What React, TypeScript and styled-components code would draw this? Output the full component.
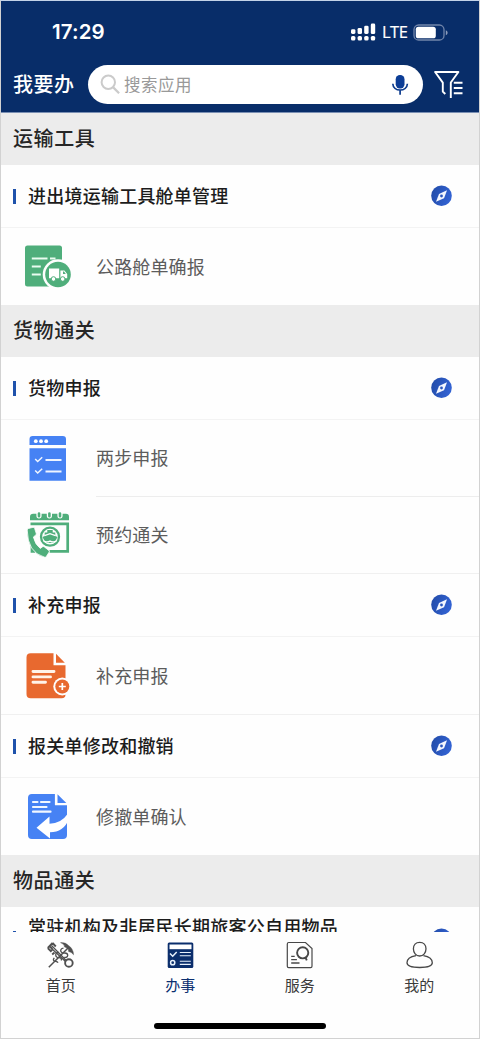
import React from "react";
import styled, { createGlobalStyle } from "styled-components";

const GlobalStyle = createGlobalStyle`
  * { box-sizing: border-box; }
  body {
    margin: 0;
    font-family: "Noto Sans CJK SC", "Noto Sans", sans-serif;
    background: #fff;
  }
  svg { display: block; flex: none; }
`;

const Screen = styled.div`
  display: flex;
  flex-direction: column;
  width: 480px;
  height: 1039px;
  border: 1px solid #d2d2d2;
  border-top-color: #c3d3e8;
  overflow: hidden;
  background: #fefefe;
`;

const Header = styled.header`
  flex: none;
  height: 112px;
  background: #082d69;
  color: #fff;
  border-bottom: 1px solid #7a8fb3;
`;

const StatusBar = styled.div`
  display: flex;
  align-items: center;
  height: 63px;
  padding: 0 31px 0 51px;
`;

const Clock = styled.div`
  flex: 1;
  font: 600 20.5px/24px Inter, sans-serif;
  letter-spacing: 0.1px;
  padding-bottom: 1px;
`;

const Network = styled.span`
  width: 26px;
  margin: 0 5px 0 6px;
  font: 500 16.5px/24px "Open Sans", sans-serif;
  letter-spacing: -0.5px;
  white-space: nowrap;
  padding-bottom: 1px;
  -webkit-text-stroke: 0.2px #fff;
`;

const SearchRow = styled.div`
  display: flex;
  align-items: center;
  height: 41px;
  padding-left: 12px;
`;

const PageTitle = styled.h1`
  width: 75px;
  margin: 0;
  padding-bottom: 1px;
  font-size: 20px;
  font-weight: 500;
  line-height: 30px;
  letter-spacing: 0.5px;
`;

const SearchBox = styled.div`
  display: flex;
  align-items: center;
  width: 335px;
  height: 39px;
  margin-right: 11px;
  padding: 0 14px 0 12px;
  border-radius: 20px;
  background: #fff;
`;

const Placeholder = styled.span`
  flex: 1;
  padding: 0 0 2px 3px;
  font-size: 16.5px;
  line-height: 24px;
  letter-spacing: 0.5px;
  color: #999;
`;

const List = styled.main`
  flex: none;
  height: 819px;
  overflow: hidden;
`;

const SectionTitle = styled.h2`
  height: 52px;
  margin: 0;
  padding: 0 0 0 12px;
  background: #ececec;
  color: #262626;
  font-size: 20px;
  font-weight: 500;
  line-height: 50px;
  letter-spacing: 0.6px;
`;

const GroupHead = styled.div<{ $h: number }>`
  display: flex;
  align-items: center;
  height: ${(p) => p.$h}px;
  padding: 0 27px 0 12px;
  border-bottom: 1px solid #f3f3f3;
`;

const Marker = styled.i`
  width: 2.5px;
  height: 15px;
  margin-right: 12.5px;
  background: #1f52ab;
`;

const GroupName = styled.h3`
  flex: 1;
  margin: 0;
  padding-bottom: 2px;
  color: #1c1c1c;
  font-size: 18px;
  font-weight: 500;
  line-height: 23px;
  letter-spacing: 0.23px;
`;

const GroupText = styled.span`
  display: block;
  width: 316px;
`;

const Item = styled.div<{ $h: number }>`
  display: flex;
  height: ${(p) => p.$h}px;
  padding-left: 20px;
  align-items: center;
`;

const ItemLabel = styled.div<{ $divided?: boolean }>`
  flex: 1;
  display: flex;
  align-items: center;
  align-self: stretch;
  margin-left: 21px;
  padding-bottom: 2px;
  border-bottom: ${(p) => (p.$divided ? "1px solid #ededed" : "0")};
  color: #5c5c5c;
  font-size: 18px;
  font-weight: 400;
  letter-spacing: 0.15px;
`;

const GroupRule = styled.div`
  height: 1px;
  background: #f0f0f0;
`;

const TabBar = styled.nav`
  display: flex;
  flex: none;
  height: 75px;
  background: #fefefe;
`;

const Tab = styled.div<{ $active?: boolean }>`
  flex: 1;
  display: flex;
  flex-direction: column;
  align-items: center;
  padding-top: 9px;
  gap: 4px;
  color: ${(p) => (p.$active ? "#0b2f70" : "#3a3a3a")};
  font-size: 15px;
  line-height: 24px;
  letter-spacing: 0.1px;
`;

const HomeIndicator = styled.div`
  flex: none;
  width: 172px;
  height: 6px;
  margin: 16px auto 0;
  border-radius: 3px;
  background: #000;
`;

const Signal = () => (
  <svg width="26" height="20" viewBox="0 0 26 20" fill="#fff">
    {[0, 1, 2, 3].map((n) => (
      <g key={n}>
        <rect x={1 + n * 6.6} y={[6.2, 4.9, 2.7, 0.6][n]} width="4.4" height={[4.8, 6.2, 8.3, 10.5][n]} rx="1.4" />
        <rect x={1 + n * 6.6} y="12.9" width="4.4" height="4.6" rx="1.6" />
      </g>
    ))}
  </svg>
);

const Battery = () => (
  <svg width="35" height="18" viewBox="0 0 35 18">
    <rect x="1" y="1" width="30" height="15" rx="4.6" fill="none" stroke="#7286ab" strokeWidth="1.3" />
    <rect x="2.8" y="2.7" width="20" height="11.6" rx="2.6" fill="#fff" />
    <path d="M32.8 6.2v5c1.2-.4 1.8-1.4 1.8-2.5s-.6-2.1-1.8-2.5z" fill="#8b9bb9" />
  </svg>
);

const SearchIcon = () => (
  <svg width="21" height="21" viewBox="0 0 21 21" fill="none" stroke="#cbcbcb" strokeWidth="2">
    <circle cx="8.3" cy="8.3" r="6.7" />
    <path d="M13.2 13.4l5.9 5.8" strokeWidth="2.3" />
  </svg>
);

const MicIcon = () => (
  <svg width="18" height="22" viewBox="0 0 18 22" fill="none" stroke="#0c3b8d" strokeWidth="1.7">
    <rect x="4.7" y="1" width="8.8" height="13.4" rx="4.2" fill="#0c3d96" stroke="none" />
    <path d="M1.8 9.7c.2 4 3.4 6.3 7.3 6.3s7.1-2.3 7.3-6.3M9.1 16v4.8" />
  </svg>
);

const FilterIcon = () => (
  <svg width="30" height="30" viewBox="0 0 30 30" fill="none" stroke="#fff" strokeWidth="1.9">
    <path d="M11.3 24l-2.5-2.4V12.600L1.100 2H24.400l-7.600 10.500v15.400" strokeLinejoin="round" />
    <path d="M19.800 12.800h8.700M19.800 18h8.700M19.800 23.200h8.700" />
  </svg>
);

const Compass = () => (
  <svg width="22" height="22" viewBox="0 0 22 22">
    <defs>
      <linearGradient id="compassFill" x1="0" y1="0" x2="1" y2="0.3">
        <stop offset="0" stopColor="#214aa6" />
        <stop offset="1" stopColor="#3262d2" />
      </linearGradient>
    </defs>
    <circle cx="11.500" cy="10.800" r="10.300" fill="url(#compassFill)" />
    <path d="M17 5.300L14 13.200l-8 3.600L9 8.900z" fill="#f4f7ff" />
    <circle cx="11.500" cy="11" r="1.400" fill="#2b57bd" />
  </svg>
);

const TruckDocIcon = () => (
  <svg width="54" height="54" viewBox="0 0 54 54">
    <path d="M4 8q0-2.500 2.500-2.500h32Q41 5.500 41 8v38.500H6.500Q4 46.500 4 44z" fill="#4fae7b" />
    <path d="M10.800 18.500h15.700M29 18.500h5.500M10.800 26.500h9M10.800 34.500h9" stroke="#e9fbf0" strokeWidth="2.200" />
    <circle cx="37" cy="34.500" r="15.300" fill="#fefefe" />
    <circle cx="37" cy="34.500" r="12.800" fill="#4fae7b" />
    <path d="M28 28.500h10.200v9.700H28z M39.400 30.500h4l2.800 3.500v4.200h-6.800z" fill="#fff" />
    <path d="M42 31.500h1l1.800 2.600H42z" fill="#4fae7b" />
    <g fill="#fff" stroke="#4fae7b" strokeWidth="1">
      <circle cx="32.500" cy="39" r="2.300" />
      <circle cx="41.700" cy="39" r="2.300" />
    </g>
  </svg>
);

const ChecklistIcon = () => (
  <svg width="54" height="54" viewBox="0 0 54 54">
    <path d="M8.500 13V7.200q0-3.200 3.200-3.200h30.100Q45 4 45 7.200V13z M8.500 16.200H45v32.500H8.500z" fill="#4682f4" />
    <g fill="#fff">
      <circle cx="14.800" cy="9.200" r="1.900" />
      <circle cx="20" cy="9.200" r="1.900" />
      <circle cx="25.200" cy="9.200" r="1.900" />
    </g>
    <g fill="none" stroke="#eff5ff" strokeWidth="1.900">
      <path d="M14.200 26.900l2.500 2.600 4.500-4.200M14.200 38.400l2.500 2.600 4.500-4.200" strokeWidth="1.500" />
      <path d="M24.500 28h16M24.500 39.500h16" />
    </g>
  </svg>
);

const BookingIcon = () => (
  <svg width="54" height="54" viewBox="0 0 54 54">
    <path d="M9 12.300V9q0-3.200 3.200-3.200H45Q48 5.800 48 9v3.300z" fill="#4fae7b" />
    <g stroke="#fefefe" strokeWidth="5.200" strokeLinecap="round">
      <path d="M18 4v3.800M28.400 4v3.800M39 4v3.800" />
    </g>
    <g stroke="#4fae7b" strokeWidth="2.600" strokeLinecap="round">
      <path d="M18 5.500v2.800M28.400 5.500v2.800M39 5.500v2.800" />
    </g>
    <path d="M9.500 15.900h37.200v27.500H28.500M11 38v5.500h3" fill="none" stroke="#4fae7b" strokeWidth="2.700" />
    <path d="M6.200 22q0-1.300 1.300-1.500l4.500-1.200q1.300-.2 1.600 1l1.600 5q.3 1.200-.6 1.900l-2.200 1.800q1.500 7.300 6.900 11.400l2-1.500q1-.7 2 0l4.500 3.500q1 .8.200 1.900l-2.500 4q-.8 1.200-2.200.8Q6.500 44.500 6.200 22z" fill="#4fae7b" stroke="#fefefe" strokeWidth=".8" />
    <circle cx="29" cy="28.700" r="9" fill="#fefefe" stroke="#4fae7b" strokeWidth="2.300" />
    <path d="M21.500 29l2.200-.9v-3.700h2.600v-2.300h5.400v2.300h2.600v3.700l2.200.9-2.300 4.500q-5.200 3-10.400 0z" fill="#4fae7b" />
    <path d="M23.500 27.600l5.500-2 5.500 2M22.300 32.800q3.300 2 6.700.3 3.400 1.700 6.700-.3" fill="none" stroke="#fff" strokeWidth="1.300" />
  </svg>
);

const AddDocIcon = () => (
  <svg width="54" height="54" viewBox="0 0 54 54">
    <path d="M5.500 8.500q0-4.200 4.200-4.200H32.500v12h12V45.500q0 3.800-3.800 3.800H9.700Q5.500 49.300 5.500 45z" fill="#e8692f" />
    <path d="M35 4.700v9h8.800z" fill="#e8692f" />
    <path d="M12 22.500H33M12 27.900H29.500M12 33.200H24.500" stroke="#fff3e9" strokeWidth="2.900" strokeLinecap="round" />
    <circle cx="41.300" cy="37.500" r="9" fill="#fefefe" />
    <circle cx="41.300" cy="37.500" r="7" fill="#e8692f" />
    <path d="M41.300 34v7M37.800 37.500h7" stroke="#fff" strokeWidth="1.700" />
  </svg>
);

const ReturnDocIcon = () => (
  <svg width="54" height="54" viewBox="0 0 54 54">
    <path d="M7 8q0-3.900 3.900-3.900h23v11.200H46V45q0 4-4 4H10.900Q7 49 7 45z" fill="#4682f4" />
    <path d="M36.500 4.300v8.800h8.800z" fill="#4682f4" />
    <path d="M12 12h4.500M20 12h8.500M12 17h13.500M12 21.700H29.500" stroke="#f2f7ff" strokeWidth="2.200" strokeLinecap="round" />
    <path d="M15.500 37.700L28.500 26.500v7.200q11.500 0 18.500-10.200l.8 6Q42.500 42.300 29 42.300v6.200z" fill="#fff" />
  </svg>
);

const CustomsIcon = () => (
  <svg width="29" height="28" viewBox="0 0 29 28" fill="none" stroke="#505050" strokeWidth="1.600">
    <path d="M5.500 4.500L19.800 19M4 6l16 15" strokeWidth="1.200" />
    <path d="M1.800 7l4.800-5M6.500 2l3.300 3.500M1.800 7l3 3.200 1.700-1.800M8.500 11.500l-2.300 2M3.500 4.800l3 3" strokeWidth="1.900" />
    <circle cx="22.900" cy="22" r="3.800" strokeWidth="1.900" />
    <path d="M2.800 26.300L22.500 6.500" strokeWidth="1.500" />
    <path d="M14.500 1.600q5.300-.4 8 2.900 4.800 3 5.100 9.300-2.200-3-5-3.300.2-2.200-1.300-3.200Q20 6.200 18.500 6q.2-2.800-4-4.400z" fill="#505050" strokeWidth=".4" />
    <path d="M17.500 7.200q-3.600.6-2.600 3.200.8 2 4 1.600 2.800 0 2.800 2.300-.4 2.700-3.500 2M12.800 11.500q-3.500-.2-3 3 .3 2.300 3.300 2.200 2.600.1 2.300 2.800M8.300 16.800q-2 2.500.3 3.300 2.600.3 3.500 1.500" strokeWidth="1.300" />
  </svg>
);

const TasksIcon = () => (
  <svg width="29" height="28" viewBox="0 0 29 28">
    <rect x="1.700" y="1.400" width="25.600" height="25.600" rx="1.500" fill="#0b2e6c" />
    <path d="M3.500 3.500h22v4.700h-22z" fill="#fff" />
    <g fill="none" stroke="#e8f1fc" strokeWidth="1.500">
      <path d="M4 12.500l2.700 2.700 4-4.300" />
      <circle cx="6.700" cy="21.700" r="2.100" />
      <path d="M13.800 11.500h11M13.800 14.700h11M13.800 20.200h11M13.800 23.400h11" strokeWidth="1.100" />
    </g>
  </svg>
);

const ServiceIcon = () => (
  <svg width="29" height="28" viewBox="0 0 29 28" fill="none" stroke="#484848" strokeWidth="1.200">
    <path d="M3.700 1.500H20.500L27 7.500V25.200q0 1.400-1.400 1.400H3.700q-1.400 0-1.400-1.400V2.900q0-1.400 1.400-1.400z" />
    <circle cx="17.700" cy="11.800" r="5.600" strokeWidth="1.900" />
    <path d="M20.500 16.700l1.300 2.700" strokeWidth="1.900" />
    <path d="M6.200 15.300h3.500M6.200 18.700h5.700M6.200 22h8.300" strokeWidth="1.300" />
  </svg>
);

const ProfileIcon = () => (
  <svg width="29" height="28" viewBox="0 0 29 28" fill="none" stroke="#484848" strokeWidth="1.300">
    <path d="M14.700 1.300c4 0 6.300 2.800 6.300 6.500 0 4-2.500 7.200-6.300 7.200s-6.300-3.200-6.300-7.200c0-3.700 2.300-6.500 6.300-6.500z" />
    <path d="M11 14.600C5.500 15.500 2 17.300 2 21.700q0 4.700 12.700 4.800 12.600-.1 12.600-4.800c0-4.400-3.500-6.200-8.900-7.100" />
  </svg>
);

function Group({ name, height = 64 }: { name: string; height?: number }) {
  return (
    <GroupHead $h={height}>
      <Marker />
      <GroupName>
        <GroupText>{name}</GroupText>
      </GroupName>
      <Compass />
    </GroupHead>
  );
}

interface EntryProps {
  icon: React.ReactNode;
  label: string;
  height?: number;
  divided?: boolean;
}

function Entry({ icon, label, height = 77, divided }: EntryProps) {
  return (
    <Item $h={height}>
      {icon}
      <ItemLabel $divided={divided}>{label}</ItemLabel>
    </Item>
  );
}

export default function App() {
  return (
    <>
      <GlobalStyle />
      <Screen>
        <Header>
          <StatusBar>
            <Clock>17:29</Clock>
            <Signal />
            <Network>LTE</Network>
            <Battery />
          </StatusBar>
          <SearchRow>
            <PageTitle>我要办</PageTitle>
            <SearchBox>
              <SearchIcon />
              <Placeholder>搜索应用</Placeholder>
              <MicIcon />
            </SearchBox>
            <FilterIcon />
          </SearchRow>
        </Header>
        <List>
          <SectionTitle>运输工具</SectionTitle>
          <Group name="进出境运输工具舱单管理" height={63} />
          <Entry icon={<TruckDocIcon />} label="公路舱单确报" />
          <SectionTitle>货物通关</SectionTitle>
          <Group name="货物申报" height={63} />
          <Entry icon={<ChecklistIcon />} label="两步申报" divided />
          <Entry icon={<BookingIcon />} label="预约通关" height={76} />
          <GroupRule />
          <Group name="补充申报" height={63} />
          <Entry icon={<AddDocIcon />} label="补充申报" />
          <GroupRule />
          <Group name="报关单修改和撤销" height={63} />
          <Entry icon={<ReturnDocIcon />} label="修撤单确认" />
          <SectionTitle>物品通关</SectionTitle>
          <Group name="常驻机构及非居民长期旅客公自用物品通关" />
        </List>
        <TabBar>
          <Tab>
            <CustomsIcon />
            首页
          </Tab>
          <Tab $active>
            <TasksIcon />
            办事
          </Tab>
          <Tab>
            <ServiceIcon />
            服务
          </Tab>
          <Tab>
            <ProfileIcon />
            我的
          </Tab>
        </TabBar>
        <HomeIndicator />
      </Screen>
    </>
  );
}
